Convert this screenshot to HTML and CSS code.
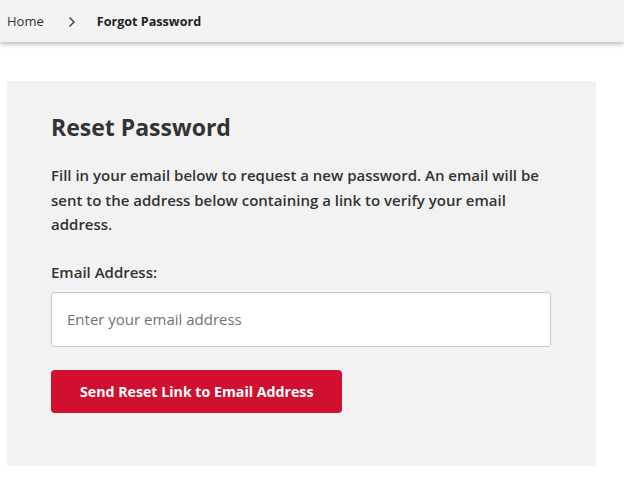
FILE: index.html
```html
<!DOCTYPE html>
<html lang="en">
<head>
<meta charset="utf-8">
<title>Forgot Password</title>
<link rel="stylesheet" href="styles.css">
</head>
<body>
<header class="crumbs">
  <a class="crumb-link" href="#">Home</a>
  <svg class="crumb-sep" width="8" height="12" viewBox="0 0 8 12" aria-hidden="true"><path d="M1.5 1.5 L6 6 L1.5 10.5" fill="none" stroke="#333" stroke-width="1.3"/></svg>
  <span class="crumb-current">Forgot Password</span>
</header>
<main class="page">
  <section class="card">
    <h1 class="title">Reset Password</h1>
    <p class="intro">Fill in your email below to request a new password. An email will be sent to the address below containing a link to verify your email address.</p>
    <label class="label" for="email">Email Address:</label>
    <input class="input" id="email" type="email" placeholder="Enter your email address">
    <button class="btn" type="button">Send Reset Link to Email Address</button>
  </section>
</main>
</body>
</html>
```
FILE: styles.css
```css
* { box-sizing: border-box; }
html, body { margin: 0; padding: 0; background: #fff; }
body {
  font-family: "Open Sans", "Noto Sans", sans-serif;
  color: #333;
}
.crumbs {
  height: 42px;
  background: #f3f3f3;
  display: flex;
  align-items: center;
  padding: 0 7px;
  font-size: 13px;
  box-shadow: 0 2px 5px rgba(0,0,0,0.28);
}
.crumb-link { color: #333; text-decoration: none; }
.crumb-sep { margin: 1px 21px 0 24px; }
.crumb-current { font-weight: 700; color: #222; font-size: 12.6px; }
.page { padding: 39px 0 0 7px; }
.card {
  width: 589px;
  background: #f2f2f2;
  padding: 30px 44px 53px 44px;
  display: flex;
  flex-direction: column;
  align-items: flex-start;
}
.title {
  margin: 0;
  font-size: 23px;
  line-height: 32px;
  font-weight: 700;
  color: #333;
}
.intro {
  margin: 20px 0 0 0;
  font-size: 15px;
  line-height: 24.5px;
  font-weight: 600;
  color: #333;
}
.label {
  margin-top: 24px;
  font-size: 15px;
  line-height: 22px;
  font-weight: 600;
}
.input {
  margin-top: 9px;
  width: 500px;
  height: 55px;
  border: 1px solid #cbcbcb;
  border-radius: 3px;
  background: #fff;
  padding: 0 15px;
  font-family: inherit;
  font-size: 15px;
  color: #333;
}
.input::placeholder { color: #6f7378; }
.btn {
  margin-top: 23px;
  height: 43px;
  padding: 0 29px;
  background: #d0102e;
  color: #fff;
  border: none;
  border-radius: 4px;
  font-family: inherit;
  font-size: 14.2px;
  font-weight: 700;
}
```
